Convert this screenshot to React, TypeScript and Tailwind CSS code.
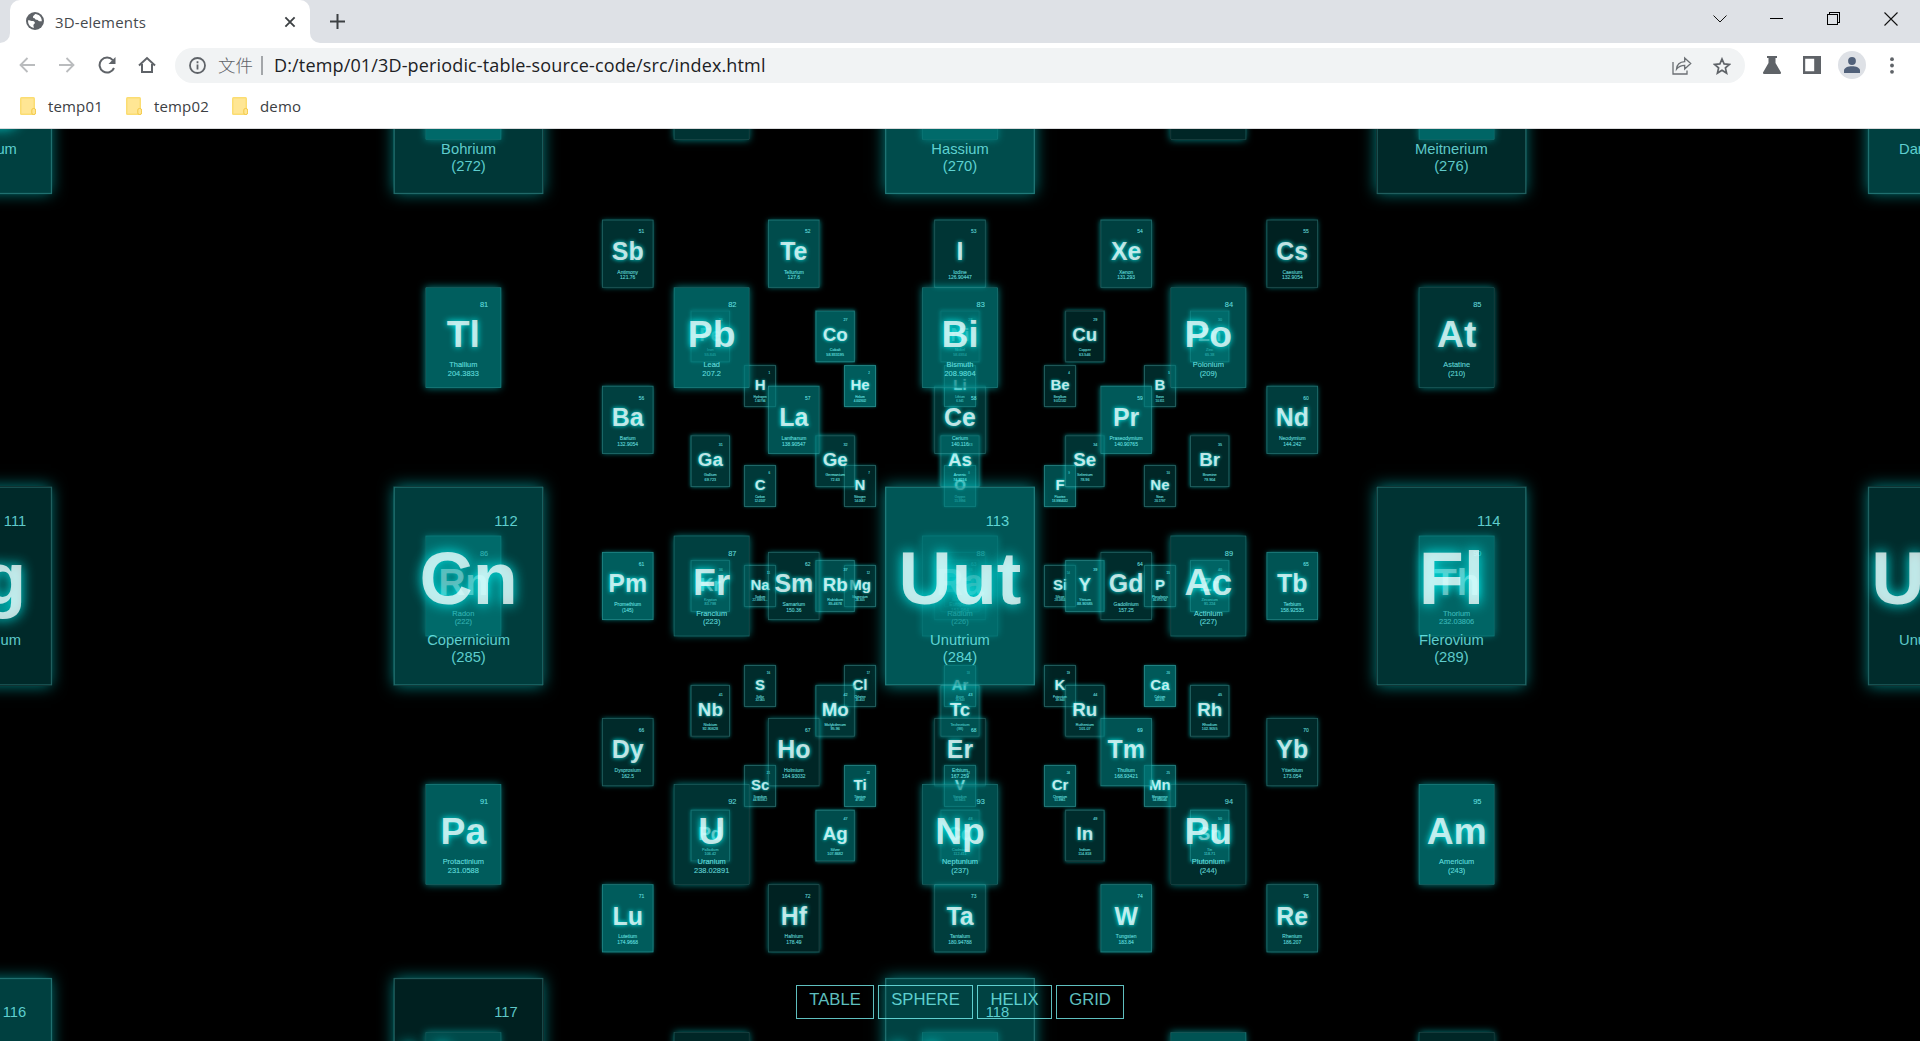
import React from "react";

type ElementRow = [symbol: string, name: string, weight: string, alpha: number];

const ELEMENTS: ElementRow[] = [
  ["H", "Hydrogen", "1.00794", 0.3],
  ["He", "Helium", "4.002602", 0.72],
  ["Li", "Lithium", "6.941", 0.5],
  ["Be", "Beryllium", "9.012182", 0.3],
  ["B", "Boron", "10.811", 0.33],
  ["C", "Carbon", "12.0107", 0.45],
  ["N", "Nitrogen", "14.0067", 0.3],
  ["O", "Oxygen", "15.9994", 0.5],
  ["F", "Fluorine", "18.9984032", 0.6],
  ["Ne", "Neon", "20.1797", 0.3],
  ["Na", "Sodium", "22.98976...", 0.28],
  ["Mg", "Magnesium", "24.305", 0.36],
  ["Al", "Aluminium", "26.9815386", 0.4],
  ["Si", "Silicon", "28.0855", 0.27],
  ["P", "Phosphorus", "30.973762", 0.4],
  ["S", "Sulfur", "32.065", 0.35],
  ["Cl", "Chlorine", "35.453", 0.3],
  ["Ar", "Argon", "39.948", 0.45],
  ["K", "Potassium", "39.948", 0.28],
  ["Ca", "Calcium", "40.078", 0.7],
  ["Sc", "Scandium", "44.955912", 0.35],
  ["Ti", "Titanium", "47.867", 0.62],
  ["V", "Vanadium", "50.9415", 0.45],
  ["Cr", "Chromium", "51.9961", 0.6],
  ["Mn", "Manganese", "54.938045", 0.6],
  ["Fe", "Iron", "55.845", 0.4],
  ["Co", "Cobalt", "58.933195", 0.7],
  ["Ni", "Nickel", "58.6934", 0.4],
  ["Cu", "Copper", "63.546", 0.28],
  ["Zn", "Zinc", "65.38", 0.6],
  ["Ga", "Gallium", "69.723", 0.42],
  ["Ge", "Germanium", "72.63", 0.42],
  ["As", "Arsenic", "74.9216", 0.55],
  ["Se", "Selenium", "78.96", 0.4],
  ["Br", "Bromine", "79.904", 0.32],
  ["Kr", "Krypton", "83.798", 0.45],
  ["Rb", "Rubidium", "85.4678", 0.6],
  ["Sr", "Strontium", "87.62", 0.4],
  ["Y", "Yttrium", "88.90585", 0.65],
  ["Zr", "Zirconium", "91.224", 0.6],
  ["Nb", "Niobium", "92.90628", 0.3],
  ["Mo", "Molybdenum", "95.96", 0.42],
  ["Tc", "Technetium", "(98)", 0.5],
  ["Ru", "Ruthenium", "101.07", 0.38],
  ["Rh", "Rhodium", "102.9055", 0.35],
  ["Pd", "Palladium", "106.42", 0.4],
  ["Ag", "Silver", "107.8682", 0.6],
  ["Cd", "Cadmium", "112.411", 0.5],
  ["In", "Indium", "114.818", 0.35],
  ["Sn", "Tin", "118.71", 0.6],
  ["Sb", "Antimony", "121.76", 0.38],
  ["Te", "Tellurium", "127.6", 0.6],
  ["I", "Iodine", "126.90447", 0.42],
  ["Xe", "Xenon", "131.293", 0.5],
  ["Cs", "Caesium", "132.9054", 0.26],
  ["Ba", "Barium", "132.9054", 0.5],
  ["La", "Lanthanum", "138.90547", 0.65],
  ["Ce", "Cerium", "140.116", 0.4],
  ["Pr", "Praseodymium", "140.90765", 0.7],
  ["Nd", "Neodymium", "144.242", 0.48],
  ["Pm", "Promethium", "(145)", 0.73],
  ["Sm", "Samarium", "150.36", 0.36],
  ["Eu", "Europium", "151.964", 0.4],
  ["Gd", "Gadolinium", "157.25", 0.35],
  ["Tb", "Terbium", "158.92535", 0.66],
  ["Dy", "Dysprosium", "162.5", 0.33],
  ["Ho", "Holmium", "164.93032", 0.3],
  ["Er", "Erbium", "167.259", 0.28],
  ["Tm", "Thulium", "168.93421", 0.65],
  ["Yb", "Ytterbium", "173.054", 0.32],
  ["Lu", "Lutetium", "174.9668", 0.72],
  ["Hf", "Hafnium", "178.49", 0.27],
  ["Ta", "Tantalum", "180.94788", 0.48],
  ["W", "Tungsten", "183.84", 0.7],
  ["Re", "Rhenium", "186.207", 0.48],
  ["Os", "Osmium", "190.23", 0.7],
  ["Ir", "Iridium", "192.217", 0.4],
  ["Pt", "Platinum", "195.084", 0.6],
  ["Au", "Gold", "196.966569", 0.3],
  ["Hg", "Mercury", "200.59", 0.7],
  ["Tl", "Thallium", "204.3833", 0.74],
  ["Pb", "Lead", "207.2", 0.73],
  ["Bi", "Bismuth", "208.9804", 0.7],
  ["Po", "Polonium", "(209)", 0.6],
  ["At", "Astatine", "(210)", 0.4],
  ["Rn", "Radon", "(222)", 0.68],
  ["Fr", "Francium", "(223)", 0.5],
  ["Ra", "Radium", "(226)", 0.5],
  ["Ac", "Actinium", "(227)", 0.48],
  ["Th", "Thorium", "232.03806", 0.66],
  ["Pa", "Protactinium", "231.0588", 0.72],
  ["U", "Uranium", "238.02891", 0.4],
  ["Np", "Neptunium", "(237)", 0.6],
  ["Pu", "Plutonium", "(244)", 0.35],
  ["Am", "Americium", "(243)", 0.74],
  ["Cm", "Curium", "(247)", 0.45],
  ["Bk", "Berkelium", "(247)", 0.3],
  ["Cf", "Californium", "(251)", 0.6],
  ["Es", "Einstenium", "(252)", 0.65],
  ["Fm", "Fermium", "(257)", 0.3],
  ["Md", "Mendelevium", "(258)", 0.5],
  ["No", "Nobelium", "(259)", 0.5],
  ["Lr", "Lawrencium", "(262)", 0.5],
  ["Rf", "Rutherfordium", "(267)", 0.5],
  ["Db", "Dubnium", "(268)", 0.5],
  ["Sg", "Seaborgium", "(271)", 0.5],
  ["Bh", "Bohrium", "(272)", 0.43],
  ["Hs", "Hassium", "(270)", 0.6],
  ["Mt", "Meitnerium", "(276)", 0.32],
  ["Ds", "Darmstadium", "(281)", 0.5],
  ["Rg", "Roentgenium", "(280)", 0.32],
  ["Cn", "Copernicium", "(285)", 0.48],
  ["Uut", "Unutrium", "(284)", 0.68],
  ["Fl", "Flerovium", "(289)", 0.4],
  ["Uup", "Ununpentium", "(288)", 0.35],
  ["Lv", "Livermorium", "(298)", 0.5],
  ["Uus", "Ununseptium", "(294)", 0.25],
  ["Uuo", "Ununoctium", "(294)", 0.52],
];

const FOCAL = 1255;
const CAMERA_Z = 3021.5;

function Card({ index, row }: { index: number; row: ElementRow }) {
  const [symbol, name, weight, alpha] = row;
  const scale = FOCAL / (CAMERA_Z - (Math.floor(index / 25) * 1000 - 2000));
  const x = ((index % 5) * 400 - 800) * scale;
  const y = ((Math.floor(index / 5) % 5) * 400 - 800) * scale;
  // Distant cards keep a hairline border and legible small print.
  const hairline = 1.2 / scale;
  const stroke = scale < 1 ? 0.22 / scale : 0;
  return (
    <div
      className="absolute left-1/2 top-1/2 box-content h-[160px] w-[120px] border border-[rgba(127,255,255,0.25)] text-center leading-[normal] shadow-[0_0_12px_rgba(0,255,255,0.5)]"
      style={{
        backgroundColor: `rgba(0,127,127,${alpha})`,
        borderWidth: hairline,
        transform: `translate(-50%, -50%) translate(${x}px, ${y}px) scale(${scale})`,
      }}
    >
      <div
        className="absolute right-[20px] top-[20px] text-[12px] leading-[normal] text-[rgba(127,255,255,0.75)]"
        style={{ WebkitTextStroke: `${stroke}px rgba(127,255,255,0.4)` }}
      >
        {index + 1}
      </div>
      <div className="absolute inset-x-0 top-[40px] text-[60px] font-bold leading-[normal] text-[rgba(255,255,255,0.75)] [text-shadow:0_0_10px_rgba(0,255,255,0.95)]">
        {symbol}
      </div>
      <div
        className="absolute inset-x-0 bottom-[15px] text-[12px] leading-[normal] text-[rgba(127,255,255,0.75)]"
        style={{ WebkitTextStroke: `${stroke}px rgba(127,255,255,0.4)` }}
      >
        {name}
        <br />
        {weight}
      </div>
    </div>
  );
}

function Cell({ children }: { children: React.ReactNode }) {
  return <div className="flex h-[34px] w-10 shrink-0 items-center justify-center">{children}</div>;
}

function TabStrip() {
  return (
    <div className="flex h-[43px] items-stretch bg-[#dee1e6]">
      <div className="w-[10px] bg-white">
        <div className="h-full rounded-br-[10px] bg-[#dee1e6]" />
      </div>
      <div className="flex w-[300px] items-center rounded-t-[10px] bg-white pl-4 pr-[14px]">
        <svg width="18" height="18" viewBox="0 0 18 18" className="-mt-px shrink-0">
          <circle cx="9" cy="9" r="9" fill="#5f6368" />
          <path
            d="M9.2 2.1C8.5 3.4 7 3.6 7 4.9c0 1 .8 1.300 1.700 1.300.4 1.200 1.200 1.500 2.200 1.500 1.500 0 1.200 1.600 2.600 1.600h2.300c.2-3.800-2.700-7-6.600-7.200zM2.100 8.200c1.600 0 2.200.7 3.600.7 1.500 0 3.200.4 3.200 1.800 0 1.300-1.500 1.300-1.500 2.500 0 1.100.6 1.900.3 2.700C4.400 15.300 1.700 12.400 2.100 8.200z"
            fill="#fff"
          />
        </svg>
        <span className="ml-[11px] flex-1 pt-[2px] text-[15px] leading-none tracking-[0.200px] text-[#45494d]">3D-elements</span>
        <svg width="12" height="12" viewBox="0 0 13 13" fill="none" stroke="#3c4043" strokeWidth="2">
          <path d="M1.500 1.500l10 10M11.500 1.500l-10 10" />
        </svg>
      </div>
      <div className="w-[10px] bg-white">
        <div className="h-full rounded-bl-[10px] bg-[#dee1e6]" />
      </div>
      <svg width="15" height="15" viewBox="0 0 15 15" className="ml-[10px] mt-[14px]" stroke="#3c4043" strokeWidth="2">
        <path d="M0 7.500h15M7.500 0v15" />
      </svg>
      <div className="ml-auto mr-px flex h-[37px] items-center text-[#111]">
        <div className="flex w-[57px] justify-center">
          <svg width="14" height="8" viewBox="0 0 14 8" fill="none" stroke="currentColor" strokeWidth="1">
            <path d="M.5.5L7 7 13.500.5" />
          </svg>
        </div>
        <div className="flex w-[57px] justify-center">
          <div className="h-px w-[13px] bg-black" />
        </div>
        <div className="flex w-[57px] justify-center">
          <svg width="13" height="13" viewBox="0 0 13 13" fill="none" stroke="#000" shapeRendering="crispEdges">
            <path d="M.5 2.500h10v10H.5zM2.500 2.500v-2h10v10h-2" />
          </svg>
        </div>
        <div className="flex w-[57px] justify-center">
          <svg width="14" height="14" viewBox="0 0 14 14" fill="none" stroke="currentColor" strokeWidth="1.100">
            <path d="M.5.5l13 13M13.500.5l-13 13" />
          </svg>
        </div>
      </div>
    </div>
  );
}

function AddressRow() {
  return (
    <div className="flex h-[44px] items-start bg-white pl-[7px] pr-[8px] pt-[5px]">
      <Cell>
        <svg width="16" height="16" viewBox="0 0 16 16" fill="none" stroke="#babcbe" strokeWidth="1.800">
          <path d="M16 8H1.500M8.500 1L1.500 8l7 7" />
        </svg>
      </Cell>
      <Cell>
        <svg width="16" height="16" viewBox="0 0 16 16" fill="none" stroke="#babcbe" strokeWidth="1.800">
          <path d="M0 8h14.500M7.500 1l7 7-7 7" />
        </svg>
      </Cell>
      <Cell>
        <svg width="18" height="18" viewBox="0 0 18 18" fill="none">
          <path d="M14.800 4.200A7.500 7.500 0 1 0 16 12" stroke="#5f6368" strokeWidth="2" />
          <path d="M17.500 1v7h-7z" fill="#5f6368" />
        </svg>
      </Cell>
      <Cell>
        <svg width="18" height="18" viewBox="0 0 18 18" fill="none" stroke="#5f6368" strokeWidth="2">
          <path d="M1 9.500L9 2l8 7.500M4 8v8h10V8" />
        </svg>
      </Cell>
      <div className="ml-[8px] flex h-[35px] flex-1 items-center rounded-full bg-[#f1f3f4] pl-[14px]">
        <svg width="17" height="17" viewBox="0 0 17 17" fill="none" stroke="#5f6368" strokeWidth="1.800" className="shrink-0">
          <circle cx="8.500" cy="8.500" r="7.500" />
          <path d="M8.500 7.500v5M8.500 4.300v1.900" />
        </svg>
        <span className="-mt-[2px] ml-[12px] text-[17.500px] leading-none text-[#5f6368] [font-family:'Noto_Sans_CJK_SC',sans-serif] font-light">
          文件
        </span>
        <div className="ml-[8px] h-[19px] w-[2px] bg-[#a3a6a9]" />
        <span className="-mt-px ml-[11px] text-[18px] leading-none tracking-[0.150px] text-[#202124]">
          D:/temp/01/3D-periodic-table-source-code/src/index.html
        </span>
        <div className="ml-auto flex pr-[3px]">
          <Cell>
            <svg width="20" height="19" viewBox="0 0 20 19" fill="none" stroke="#6b6f73" strokeWidth="1.300">
              <path d="M1 6v12h14v-3.500" />
              <path d="M4.500 13.200c.4-4.700 3.500-7.200 8.200-7.500V2l6 5.600-6 5.400V9.300c-3.500 0-6 1-8.200 3.900z" />
            </svg>
          </Cell>
          <Cell>
            <svg width="18" height="18" viewBox="0 0 18 18" fill="none" stroke="#5f6368" strokeWidth="1.700">
              <path d="M9 2l2.100 4.900 5.300.5-4 3.500 1.200 5.200L9 13.300l-4.600 2.800 1.200-5.200-4-3.500 5.300-.5z" />
            </svg>
          </Cell>
        </div>
      </div>
      <div className="ml-[7px] flex">
        <Cell>
          <svg width="18" height="18" viewBox="0 0 18 18" fill="#5f6368">
            <path d="M4 0h10v2h-1.500v5L18 16.500c.2.900-.2 1.500-1 1.500H1c-.8 0-1.200-.6-1-1.500L5.500 7V2H4z" />
          </svg>
        </Cell>
        <Cell>
          <svg width="18" height="18" viewBox="0 0 18 18">
            <path fill="#5f6368" fillRule="evenodd" d="M0 0h18v18H0zM2.200 2.700v12.600h9V2.700z" />
          </svg>
        </Cell>
        <Cell>
          <div className="flex size-[28px] shrink-0 items-center justify-center rounded-full bg-[#dee1e6]">
            <svg width="16" height="16" viewBox="0 0 16 16" fill="#51617a">
              <circle cx="8" cy="4" r="3.900" />
              <path d="M0 16v-2.500C0 10.800 4 9.300 8 9.300s8 1.500 8 4.200V16z" />
            </svg>
          </div>
        </Cell>
        <Cell>
          <svg width="4" height="17" viewBox="0 0 4 17" fill="#5f6368">
            <circle cx="2" cy="2.200" r="1.900" />
            <circle cx="2" cy="8.500" r="1.900" />
            <circle cx="2" cy="14.800" r="1.900" />
          </svg>
        </Cell>
      </div>
    </div>
  );
}

function Bookmark({ label }: { label: string }) {
  return (
    <div className="flex w-[106px] items-center">
      <svg width="16" height="18" viewBox="0 0 16 18" className="shrink-0">
        <rect x="0" y="0" width="15" height="18" rx="1.500" fill="#fbdd72" />
        <rect x="1.500" y="1.500" width="12" height="15" fill="#ffe694" />
        <rect x="11.800" y="11.500" width="3.800" height="6" rx="1.600" fill="#ffe694" stroke="#f3c845" />
      </svg>
      <span className="ml-[12px] pt-px text-[15px] leading-none tracking-[0.150px] text-[#3c4043]">{label}</span>
    </div>
  );
}

const MENU = [
  { label: "TABLE", width: "w-[78px]" },
  { label: "SPHERE", width: "w-[95px]" },
  { label: "HELIX", width: "w-[75px]" },
  { label: "GRID", width: "w-[68px]" },
];

export default function App() {
  return (
    <div className="flex h-[1041px] w-[1920px] flex-col overflow-hidden bg-black [font-family:'Open_Sans','Noto_Sans',sans-serif]">
      <TabStrip />
      <AddressRow />
      <div className="flex h-[42px] items-start border-b border-[#d9dadc] bg-white pl-[20px] pt-[10px]">
        <Bookmark label="temp01" />
        <Bookmark label="temp02" />
        <Bookmark label="demo" />
      </div>
      <div className="relative flex-1 overflow-hidden bg-black [font-family:'Liberation_Sans',Arial,sans-serif]">
        <div className="absolute inset-x-0 top-[0.500px] h-[912px]">
          {ELEMENTS.map((row, index) => (
            <Card key={row[0]} index={index} row={row} />
          ))}
        </div>
        <div className="absolute inset-x-0 bottom-[22px] flex justify-center gap-1">
          {MENU.map((item) => (
            <button
              key={item.label}
              className={
                "h-[34px] whitespace-nowrap border border-[rgba(127,255,255,0.75)] pb-[3px] text-[16.670px] leading-none text-[rgba(127,255,255,0.75)] " +
                item.width
              }
            >
              {item.label}
            </button>
          ))}
        </div>
      </div>
    </div>
  );
}
